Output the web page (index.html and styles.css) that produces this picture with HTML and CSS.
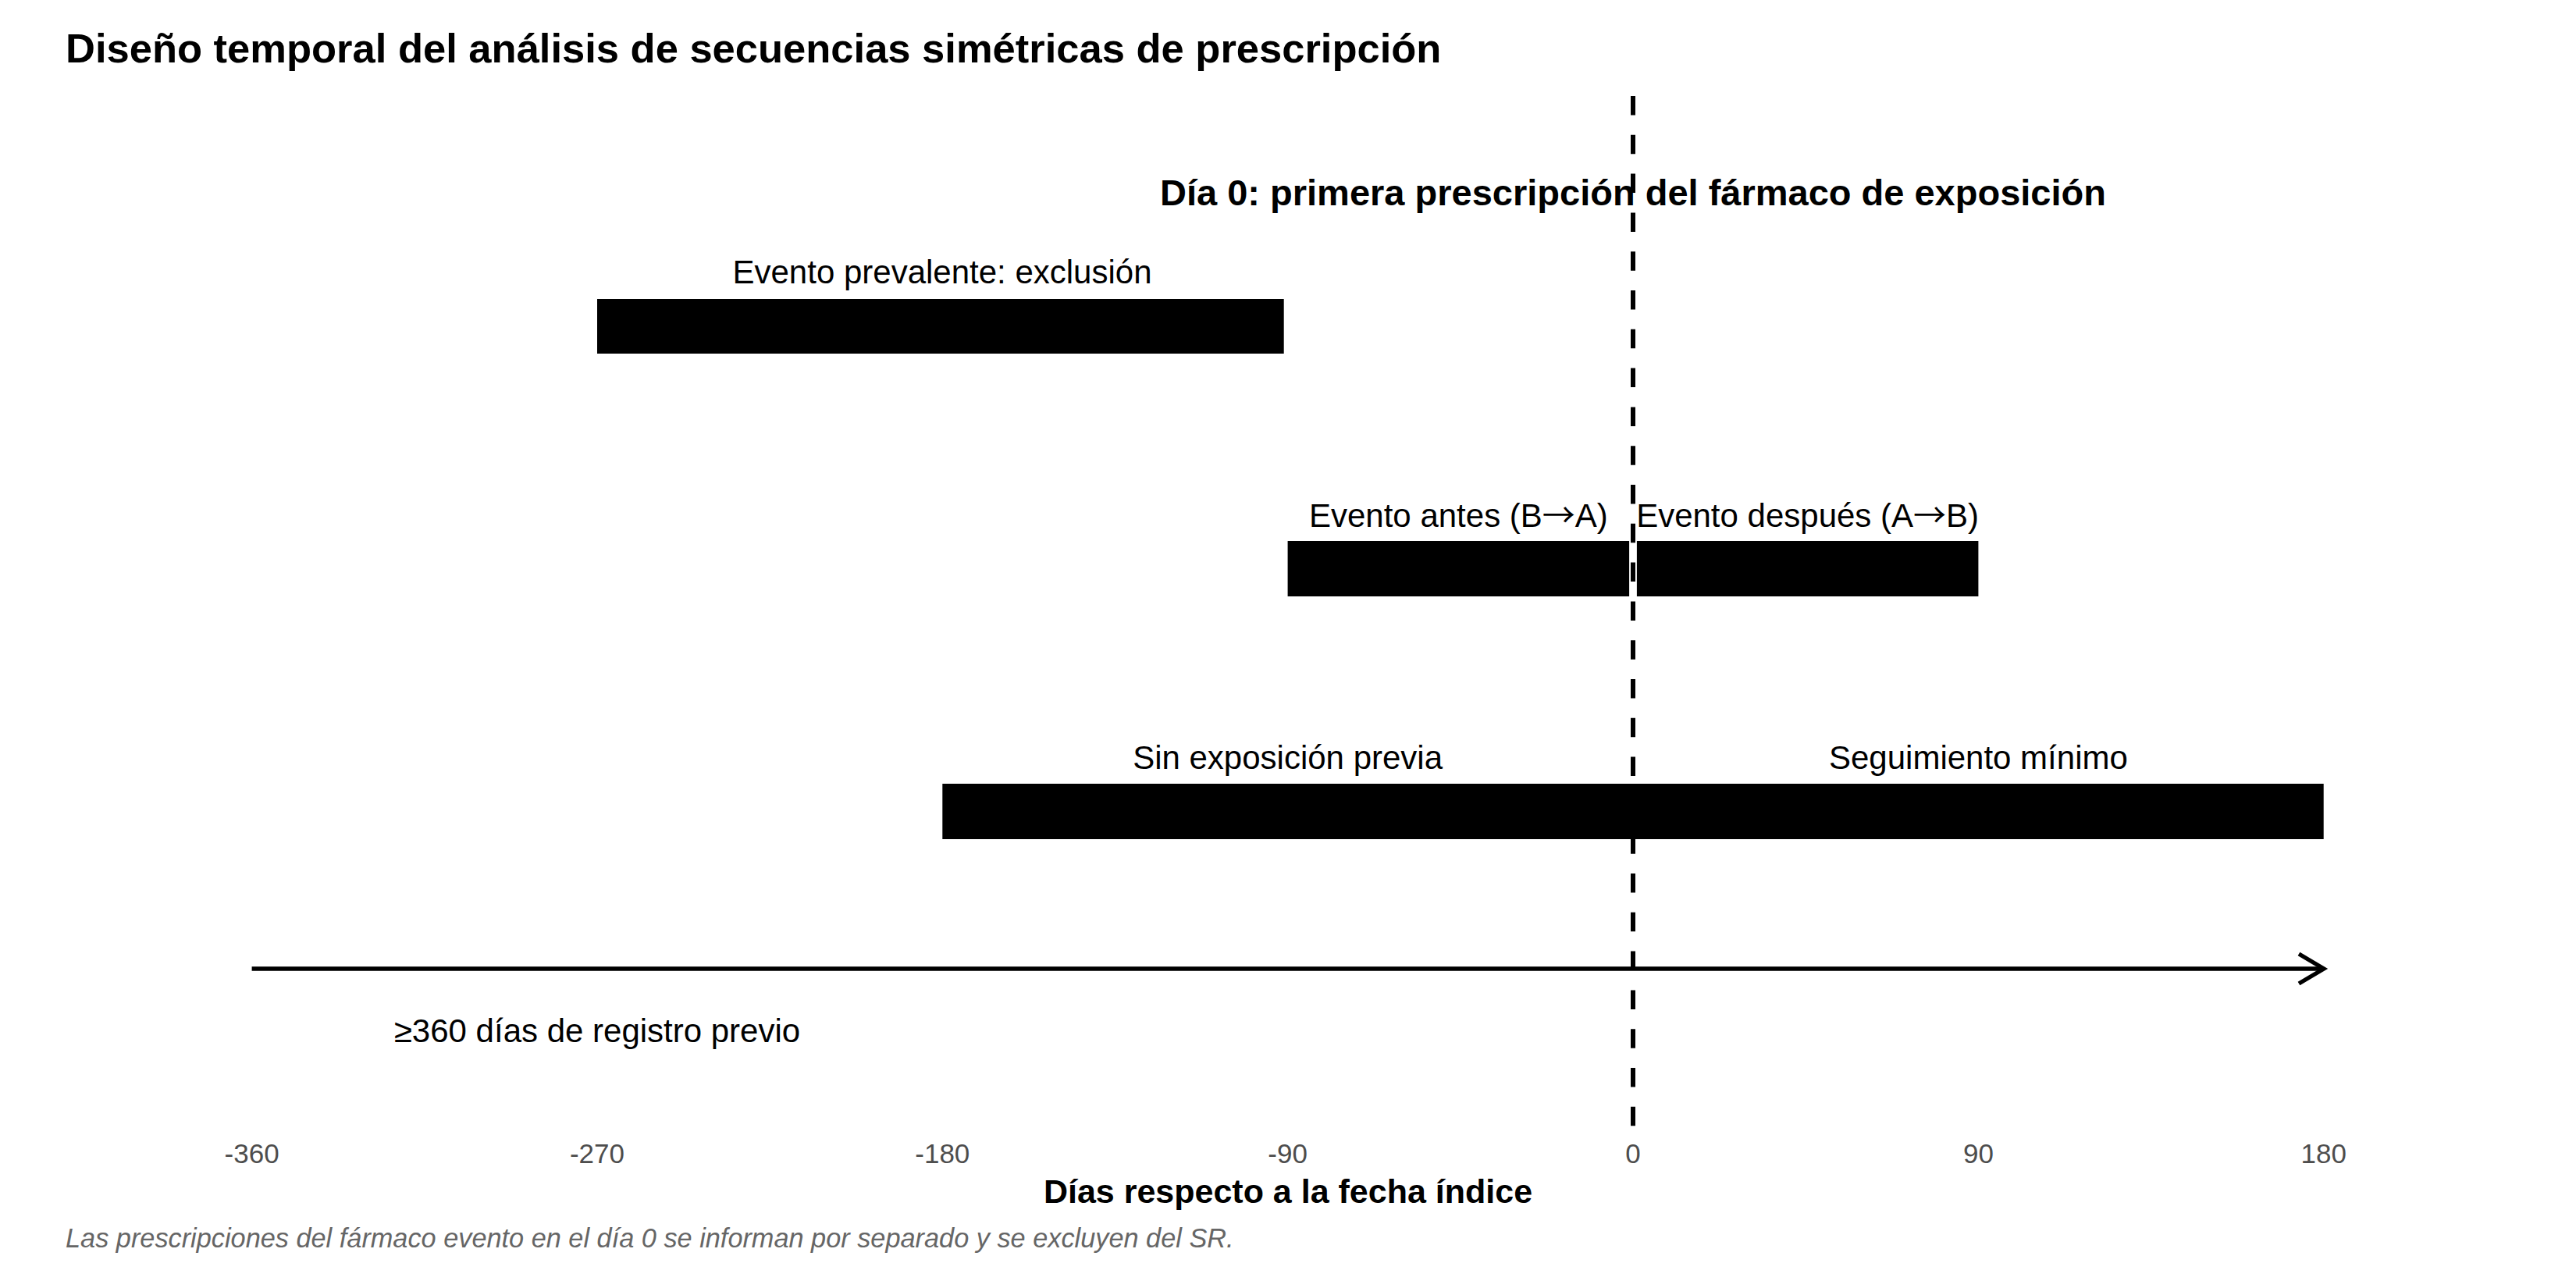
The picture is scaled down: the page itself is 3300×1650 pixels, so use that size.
FILE: index.html
```html
<!DOCTYPE html>
<html lang="es">
<head>
<meta charset="utf-8">
<title>Diseño temporal del análisis de secuencias simétricas de prescripción</title>
<link rel="stylesheet" href="styles.css">
</head>
<body>
<div class="figure">
  <h1 class="title">Diseño temporal del análisis de secuencias simétricas de prescripción</h1>
  <svg class="chart" viewBox="0 88 3300 1417" xmlns="http://www.w3.org/2000/svg">
    <!-- bars -->
    <rect class="bar" x="765" y="383" width="879.7" height="70"/>
    <rect class="bar" x="1649.6" y="693" width="437.5" height="71"/>
    <rect class="bar" x="2096.9" y="693" width="437.5" height="71"/>
    <rect class="bar" x="1207.3" y="1004" width="884.7" height="71"/>
    <rect class="bar" x="2092" y="1004" width="884.7" height="71"/>

    <!-- bar labels -->
    <text class="lbl" x="1207" y="363">Evento prevalente: exclusión</text>
    <text class="lbl" x="1868.4" y="675">Evento antes (B<tspan class="arr">→</tspan>A)</text>
    <text class="lbl" x="2315.6" y="675">Evento después (A<tspan class="arr">→</tspan>B)</text>
    <text class="lbl" x="1649.6" y="985">Sin exposición previa</text>
    <text class="lbl" x="2534.4" y="985">Seguimiento mínimo</text>
    <text class="lbl" x="765" y="1335">≥360 días de registro previo</text>

    <!-- timeline arrow -->
    <line class="axis-line" x1="322.6" y1="1241" x2="2976" y2="1241"/>
    <polyline class="axis-head" points="2945,1222 2977,1241 2945,1260"/>

    <!-- day 0 -->
    <text class="day0" x="2092" y="263">Día 0: primera prescripción del fármaco de exposición</text>
    <line class="vline" x1="2092" y1="123" x2="2092" y2="1444"/>

    <!-- ticks -->
    <text class="tick" x="322.6" y="1490">-360</text>
    <text class="tick" x="765" y="1490">-270</text>
    <text class="tick" x="1207.3" y="1490">-180</text>
    <text class="tick" x="1649.6" y="1490">-90</text>
    <text class="tick" x="2092" y="1490">0</text>
    <text class="tick" x="2534.4" y="1490">90</text>
    <text class="tick" x="2976.7" y="1490">180</text>
  </svg>
  <div class="axis-title">Días respecto a la fecha índice</div>
  <p class="caption">Las prescripciones del fármaco evento en el día 0 se informan por separado y se excluyen del SR.</p>
</div>
</body>
</html>
```

FILE: styles.css
```css
html, body {
  margin: 0;
  padding: 0;
  background: #ffffff;
}

body {
  width: 3300px;
  height: 1650px;
  overflow: hidden;
  font-family: "Liberation Sans", Arial, Helvetica, sans-serif;
  color: #000000;
}

.figure {
  display: flex;
  flex-direction: column;
  width: 3300px;
  height: 1650px;
}

.title {
  margin: 0;
  padding: 36px 0 0 84px;
  height: 52px;
  line-height: 52px;
  font-size: 52.5px;
  font-weight: bold;
  white-space: nowrap;
}

.chart {
  display: block;
  width: 3300px;
  height: 1417px;
  flex: none;
}

.bar {
  fill: #000000;
}

.lbl {
  font-family: "Liberation Sans", Arial, Helvetica, sans-serif;
  font-size: 42px;
  text-anchor: middle;
  fill: #000000;
}

.arr {
  font-family: "Noto Sans CJK JP", "DejaVu Sans", sans-serif;
}

.day0 {
  font-family: "Liberation Sans", Arial, Helvetica, sans-serif;
  font-size: 47px;
  font-weight: bold;
  text-anchor: middle;
  fill: #000000;
}

.tick {
  font-family: "Liberation Sans", Arial, Helvetica, sans-serif;
  font-size: 35px;
  text-anchor: middle;
  fill: #4d4d4d;
}

.axis-line {
  stroke: #000000;
  stroke-width: 5.3px;
}

.axis-head {
  fill: none;
  stroke: #000000;
  stroke-width: 5.3px;
  stroke-linejoin: miter;
  stroke-linecap: butt;
}

.vline {
  stroke: #000000;
  stroke-width: 6px;
  stroke-dasharray: 24.5 25.3;
}

.axis-title {
  height: 43px;
  line-height: 43px;
  font-size: 43px;
  font-weight: bold;
  text-align: center;
  white-space: nowrap;
}

.caption {
  margin: 21px 0 0 0;
  padding-left: 84px;
  line-height: 34.5px;
  font-size: 34.3px;
  font-style: italic;
  color: #666666;
  white-space: nowrap;
}
```
